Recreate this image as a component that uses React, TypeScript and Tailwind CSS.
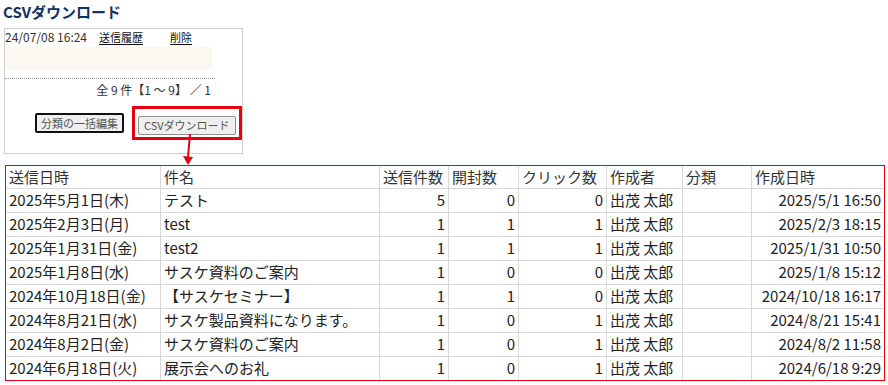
import React from "react";

const FONT = { fontFamily: '"Noto Sans CJK JP", "Noto Sans", sans-serif' };

type Row = {
  sentAt: string;
  subject: string;
  sent: number;
  opened: number;
  clicks: number;
  author: string;
  category: string;
  createdAt: string;
};

const rows: Row[] = [
  { sentAt: "2025年5月1日(木)", subject: "テスト", sent: 5, opened: 0, clicks: 0, author: "出茂 太郎", category: "", createdAt: "2025/5/1 16:50" },
  { sentAt: "2025年2月3日(月)", subject: "test", sent: 1, opened: 1, clicks: 1, author: "出茂 太郎", category: "", createdAt: "2025/2/3 18:15" },
  { sentAt: "2025年1月31日(金)", subject: "test2", sent: 1, opened: 1, clicks: 1, author: "出茂 太郎", category: "", createdAt: "2025/1/31 10:50" },
  { sentAt: "2025年1月8日(水)", subject: "サスケ資料のご案内", sent: 1, opened: 0, clicks: 0, author: "出茂 太郎", category: "", createdAt: "2025/1/8 15:12" },
  { sentAt: "2024年10月18日(金)", subject: "【サスケセミナー】", sent: 1, opened: 1, clicks: 0, author: "出茂 太郎", category: "", createdAt: "2024/10/18 16:17" },
  { sentAt: "2024年8月21日(水)", subject: "サスケ製品資料になります。", sent: 1, opened: 0, clicks: 1, author: "出茂 太郎", category: "", createdAt: "2024/8/21 15:41" },
  { sentAt: "2024年8月2日(金)", subject: "サスケ資料のご案内", sent: 1, opened: 0, clicks: 1, author: "出茂 太郎", category: "", createdAt: "2024/8/2 11:58" },
  { sentAt: "2024年6月18日(火)", subject: "展示会へのお礼", sent: 1, opened: 0, clicks: 1, author: "出茂 太郎", category: "", createdAt: "2024/6/18 9:29" },
];

// column template: widths between the gray rules
const COLS = "grid-cols-[155px_219px_69px_70px_88px_76px_69px_1fr]";

const Cell = ({ children, right, last }: { children?: React.ReactNode; right?: boolean; last?: boolean }) => (
  <div
    className={`flex items-center px-[3px] whitespace-nowrap overflow-hidden ${right ? "justify-end" : ""} ${last ? "" : "border-r border-[#d9d9d9]"}`}
  >
    {children}
  </div>
);

const App = () => {
  return (
    <div className="w-[888px] h-[385px] bg-white text-[#222] overflow-hidden relative" style={FONT}>
      {/* Title */}
      <h1 className="pl-[3px] pt-[1px] text-[15px] leading-[22px] font-bold text-[#14305c]">CSVダウンロード</h1>

      {/* Mail panel */}
      <div className="ml-[4px] mt-[5px] w-[239px] h-[126px] border border-[#cfcfcf] flex flex-col">
        <div className="flex items-center h-[16px] text-[12px] leading-[16px] text-[#333]">
          <span>24/07/08 16:24</span>
          <a className="ml-[12px] text-[11px] underline underline-offset-2 text-[#111]">送信履歴</a>
          <a className="ml-[27px] text-[11px] underline underline-offset-2 text-[#111]">削除</a>
        </div>
        <div className="mt-[2px] w-[207px] h-[23px] bg-[#fbf8f1]" />
        <div className="mt-[8px] w-[210px] border-t border-dotted border-[#999]" />
        <div className="w-[206px] mt-[3px] text-right text-[12px] leading-[16px] text-[#333]">
          全 9 件【1 ～ 9】 ／ 1
        </div>
        <div className="flex items-center mt-[8px] pl-[30px]">
          <button className="h-[20px] px-[4px] whitespace-nowrap border-2 border-[#111] rounded-[2px] bg-[#efefef] text-[11px] leading-none text-[#555]">
            分類の一括編集
          </button>
          <div className="ml-[8px] border-[3px] border-[#e60012] px-[3px] py-[2px]">
            <button className="h-[19px] px-[5px] whitespace-nowrap border border-[#8f8f8f] rounded-[2px] bg-[#efefef] text-[11px] leading-none text-[#555]">
              CSVダウンロード
            </button>
          </div>
        </div>
      </div>

      {/* Arrow annotation */}
      <svg className="absolute left-[180px] top-[134px]" width="16" height="32" viewBox="0 0 16 32">
        <line x1="10" y1="0" x2="8" y2="23" stroke="#e60012" strokeWidth="2" />
        <polygon points="3,22 13,23 8,31" fill="#e60012" />
      </svg>

      {/* Result table */}
      <div className="ml-[5px] mt-[11px] w-[880px] border border-[#e60012] text-[15px]">
        <div className={`grid ${COLS} h-[22px] leading-[22px] text-[#333]`}>
          <Cell>送信日時</Cell>
          <Cell>件名</Cell>
          <Cell>送信件数</Cell>
          <Cell>開封数</Cell>
          <Cell>クリック数</Cell>
          <Cell>作成者</Cell>
          <Cell>分類</Cell>
          <Cell last>作成日時</Cell>
        </div>
        {rows.map((r, i) => (
          <div key={i} className={`grid ${COLS} h-[24px] border-t border-[#d9d9d9]`}>
            <Cell>{r.sentAt}</Cell>
            <Cell>{r.subject}</Cell>
            <Cell right>{r.sent}</Cell>
            <Cell right>{r.opened}</Cell>
            <Cell right>{r.clicks}</Cell>
            <Cell>{r.author}</Cell>
            <Cell>{r.category}</Cell>
            <Cell right last>{r.createdAt}</Cell>
          </div>
        ))}
      </div>
    </div>
  );
};

export default App;
